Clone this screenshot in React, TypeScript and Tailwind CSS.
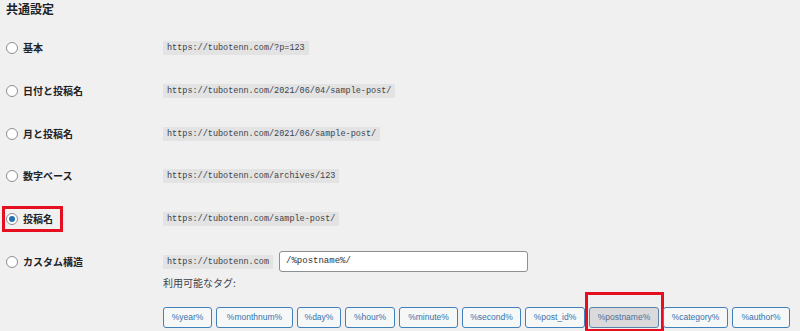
const jp = { fontFamily: '"Noto Sans CJK JP", "Noto Sans", sans-serif' };

const rows = [
  { label: '基本', url: 'https://tubotenn.com/?p=123' },
  { label: '日付と投稿名', url: 'https://tubotenn.com/2021/06/04/sample-post/' },
  { label: '月と投稿名', url: 'https://tubotenn.com/2021/06/sample-post/' },
  { label: '数字ベース', url: 'https://tubotenn.com/archives/123' },
  { label: '投稿名', url: 'https://tubotenn.com/sample-post/', checked: true },
];

const tags = [
  { name: '%year%', w: 'w-[49px]' },
  { name: '%monthnum%', w: 'w-[77px]' },
  { name: '%day%', w: 'w-[44px]' },
  { name: '%hour%', w: 'w-[50px]' },
  { name: '%minute%', w: 'w-[59px]' },
  { name: '%second%', w: 'w-[59px]' },
  { name: '%post_id%', w: 'w-[60px]' },
  { name: '%postname%', w: 'w-[70px]', active: true },
  { name: '%category%', w: 'w-[65px]' },
  { name: '%author%', w: 'w-[58px]' },
];

function Radio({ checked }: { checked?: boolean }) {
  return (
    <span className="w-[12px] h-[12px] rounded-full border border-[#8c8f94] bg-white flex items-center justify-center shrink-0">
      {checked && <span className="w-[6px] h-[6px] rounded-full bg-[#2271b1]" />}
    </span>
  );
}

function Code({ children }: { children: string }) {
  return (
    <code className="bg-[#e3e3e4] text-[#3c434a] text-[8.5px] leading-[14px] h-[14px] px-[4px] font-['Liberation_Mono',monospace]">
      {children}
    </code>
  );
}

export default function App() {
  return (
    <div className="w-[800px] h-[331px] overflow-hidden bg-[#f0f0f1] text-[#1d2327]" style={jp}>
      <h2 className="text-[12px] font-bold leading-[18px] pl-[6px] h-[27px]">共通設定</h2>

      {rows.map((r) => (
        <div key={r.label} className="flex items-center h-[42.7px]">
          <div className="relative w-[163px] shrink-0 flex items-center gap-[5px] pl-[6px]">
            <Radio checked={r.checked} />
            <span className="text-[10px] font-bold leading-[14px]">{r.label}</span>
            {r.checked && (
              <span className="absolute left-[2px] top-1/2 -translate-y-1/2 w-[61px] h-[26px] border-[3px] border-[#e60f1f]" />
            )}
          </div>
          <Code>{r.url}</Code>
        </div>
      ))}

      <div className="flex pt-[11px]">
        <div className="w-[163px] shrink-0 flex items-center gap-[5px] pl-[6px] h-[21px]">
          <Radio />
          <span className="text-[10px] font-bold leading-[14px]">カスタム構造</span>
        </div>
        <div className="flex flex-col">
          <div className="flex items-center gap-[6px]">
            <Code>https://tubotenn.com</Code>
            <div className="w-[249px] h-[21px] bg-white border border-[#8c8f94] rounded-[3px] flex items-center px-[6px] text-[9px] text-[#2c3338] font-['Liberation_Mono',monospace]">
              /%postname%/
            </div>
          </div>
          <div className="mt-[4px] text-[10px] leading-[14px] text-[#3c434a]">利用可能なタグ:</div>
          <div className="mt-[11px] flex gap-[4px]">
            {tags.map((t) => (
              <div key={t.name} className={`relative ${t.w} shrink-0`}>
                <button
                  className={
                    t.active
                      ? 'w-full h-[21px] rounded-[3px] border border-[#5a82ad] bg-[#dadadd] text-[#4f6f93] text-[8.5px] font-["Liberation_Sans",sans-serif]'
                      : 'w-full h-[21px] rounded-[3px] border border-[#3f80bd] bg-[#f6f7f7] text-[#3474b0] text-[8.5px] font-["Liberation_Sans",sans-serif]'
                  }
                >
                  {t.name}
                </button>
                {t.active && (
                  <span className="absolute left-[-4px] right-[-5px] top-[-9px] h-[40px] border-[3px] border-[#e60f1f]" />
                )}
              </div>
            ))}
          </div>
        </div>
      </div>
    </div>
  );
}
